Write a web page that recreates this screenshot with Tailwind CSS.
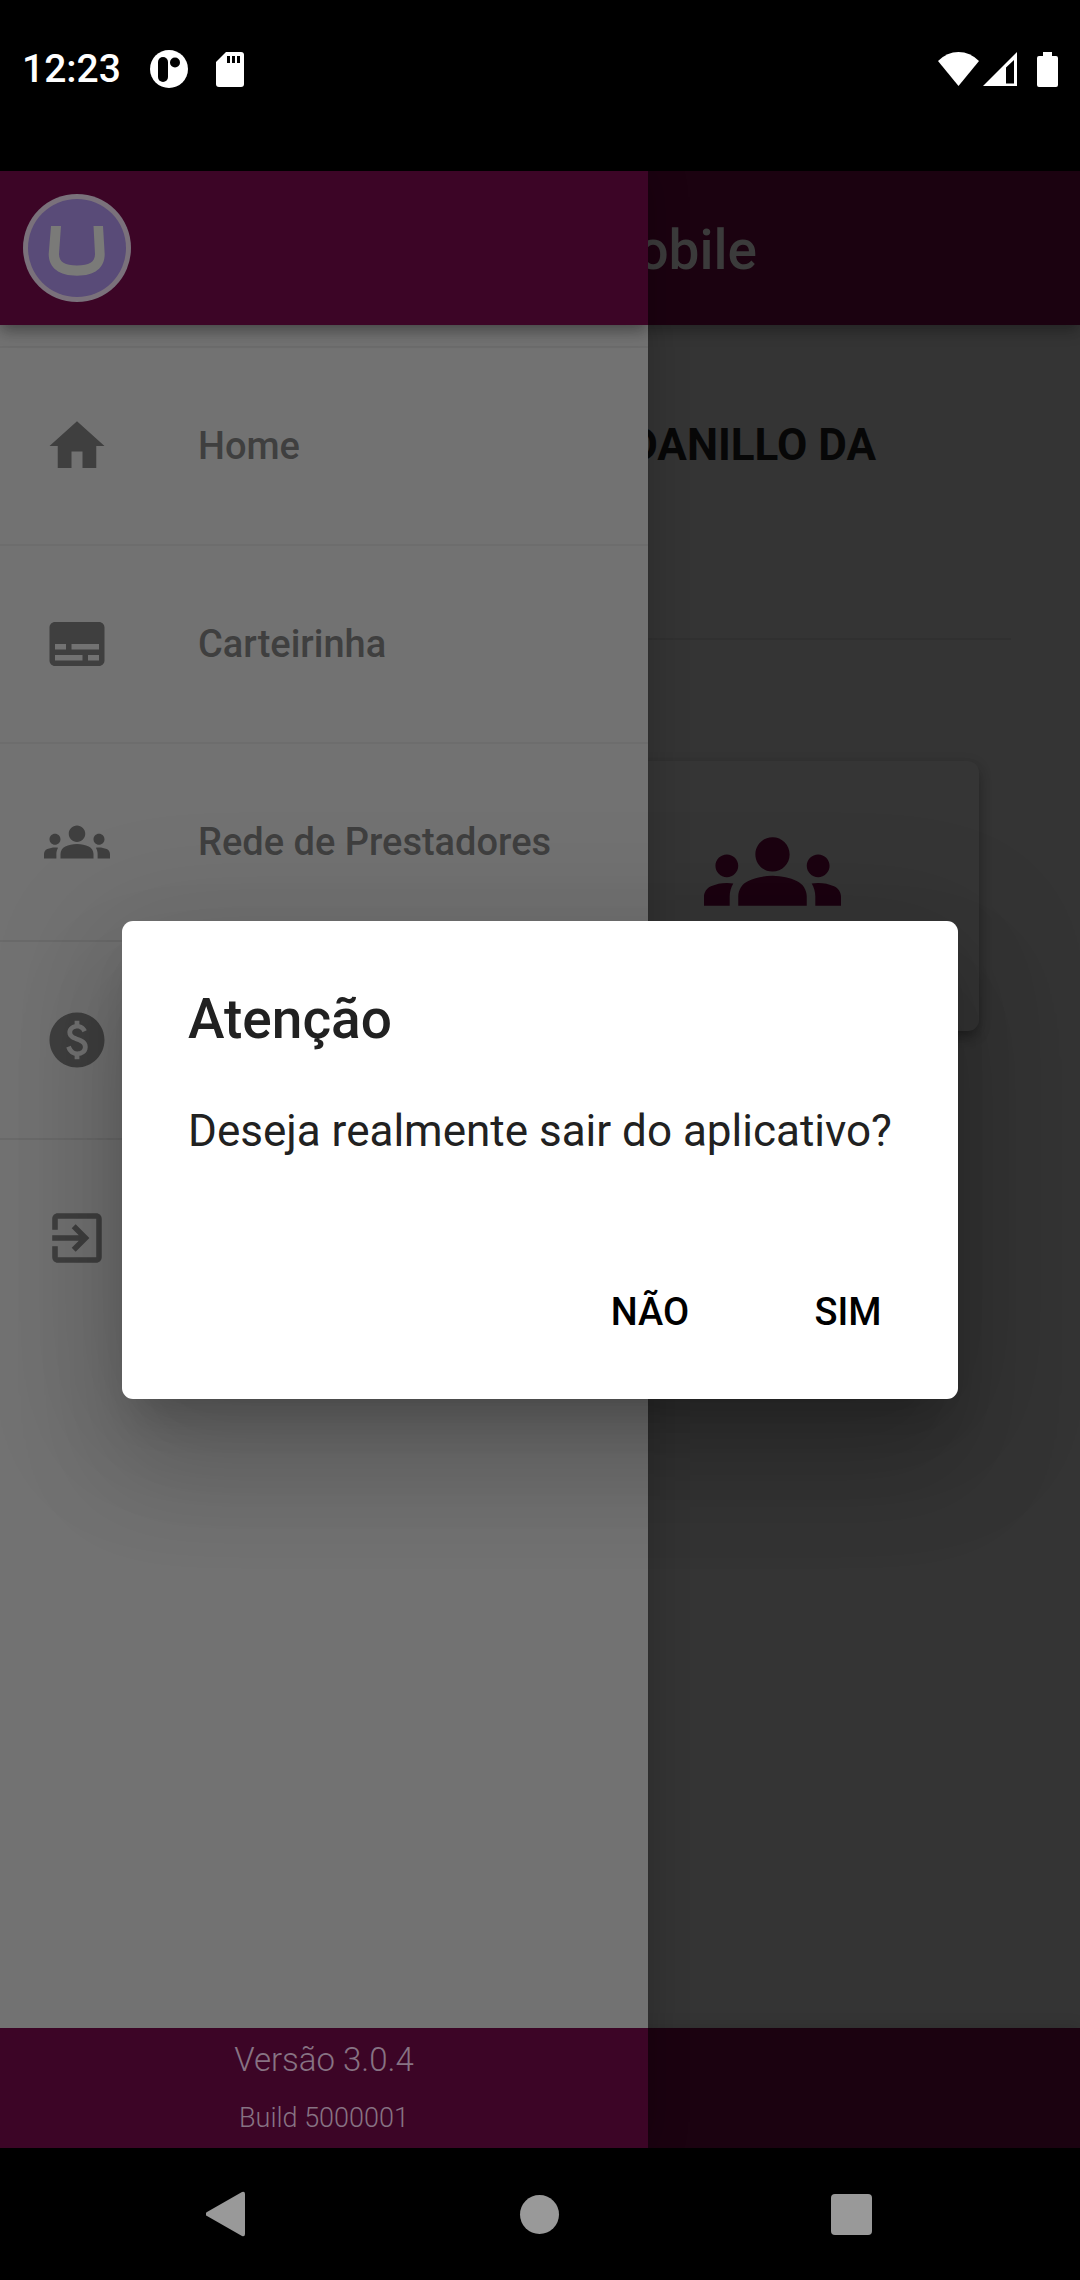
<!DOCTYPE html>
<html lang="pt-BR">
<head>
<meta charset="utf-8">
<meta name="viewport" content="width=device-width, initial-scale=1">
<title>Mobile</title>
<script src="https://cdn.jsdelivr.net/npm/@tailwindcss/browser@4"></script>
</head>
<body class="min-h-screen flex flex-col bg-black font-['Roboto',sans-serif]">

<!-- System status bar -->
<div class="h-[171px] shrink-0 text-white">
  <div class="h-[138px] px-[22px] flex items-center">
    <span class="text-[39px] font-medium leading-none">12:23</span>
    <svg class="ml-[29px] size-[38px]" viewBox="0 0 38 38" fill="currentColor"><circle cx="19" cy="19" r="19"/><rect x="8" y="7" width="10" height="25" rx="5" fill="#000"/><circle cx="25" cy="12.500" r="5" fill="#000"/></svg>
    <svg class="ml-[28px] w-[28px] h-[35px]" viewBox="0 0 28 35"><path fill="currentColor" d="M10 0H25Q28 0 28 3V32Q28 35 25 35H3Q0 35 0 32V10Z"/><path d="M11 4h3v7h-3zM16 4h3v7h-3zM21 4h3v7h-3z"/></svg>
    <span class="grow"></span>
    <svg class="w-[41px] h-[34px]" viewBox="0 0 41 34" fill="currentColor"><path d="M20.500 34L0 9Q9 0 20.500 0T41 9Z"/></svg>
    <svg class="ml-[4px] w-[34px] h-[34px]" viewBox="0 0 34 34" fill="currentColor"><path fill-rule="evenodd" d="M34 0V34H0ZM31 8L23 15.500V31.500H31Z"/></svg>
    <svg class="ml-[20px] w-[21px] h-[35px]" viewBox="0 0 21 35" fill="currentColor"><path d="M6 0h9v4h4q2 0 2 2v27q0 2-2 2H2q-2 0-2-2V6q0-2 2-2h4z"/></svg>
  </div>
</div>

<!-- App -->
<div class="relative grow flex flex-col bg-[#343434] overflow-hidden">

  <!-- Home page, dimmed behind the drawer -->
  <header class="relative z-10 h-[154px] shrink-0 flex items-center justify-end pt-1 pr-[323px] bg-[#1b0210] shadow-[0_6px_11px_-3px_rgba(0,0,0,0.2),0_8px_14px_0_rgba(0,0,0,0.14)]">
    <h1 class="text-[55px] leading-[64px] font-medium text-[#3b3b3b]">Mobile</h1>
  </header>
  <main class="grow flex flex-col">
    <p class="mt-[94px] pr-[204px] text-right text-[44px] leading-[52px] font-bold text-[#070707]">DANILLO DA</p>
    <hr class="mt-[167px] mx-[69px] border-t-2 border-[#303030]">
    <div class="mt-[121px] pr-[101px] flex justify-end">
      <button type="button" aria-label="Rede de Prestadores" class="w-[414px] h-[270px] pt-[42px] flex justify-center items-start rounded-[11px] bg-[#353535] shadow-[0_8px_14px_-3px_rgba(0,0,0,0.3),0_4px_14px_0_rgba(0,0,0,0.16)]">
        <svg class="size-[137px] text-[#1b0210]" viewBox="0 0 24 24" fill="currentColor"><path d="M12 12.750c1.630 0 3.070.39 4.240.9 1.080.48 1.760 1.560 1.760 2.730V18H6v-1.610c0-1.180.68-2.260 1.760-2.730 1.170-.52 2.610-.91 4.240-.91zM4 13c1.100 0 2-.9 2-2s-.9-2-2-2-2 .9-2 2 .9 2 2 2zm1.130 1.100c-.37-.06-.74-.1-1.130-.1-.99 0-1.930.21-2.780.58C.48 14.900 0 15.620 0 16.430V18h4.500v-1.610c0-.83.23-1.610.63-2.290zM20 13c1.100 0 2-.9 2-2s-.9-2-2-2-2 .9-2 2 .9 2 2 2zm4 3.430c0-.81-.48-1.530-1.220-1.850-.85-.37-1.790-.58-2.780-.58-.39 0-.76.04-1.130.1.4.68.63 1.460.63 2.290V18H24v-1.570zM12 6c1.660 0 3 1.340 3 3s-1.340 3-3 3-3-1.340-3-3 1.340-3 3-3z"/></svg>
      </button>
    </div>
  </main>
  <footer class="h-[120px] shrink-0 bg-[#1b0210] shadow-[0_-2px_14px_rgba(0,0,0,0.1)]"></footer>

  <!-- Navigation drawer -->
  <div class="absolute z-20 inset-y-0 left-0 w-3/5 shadow-[0_0_40px_rgba(0,0,0,0.2)]">
  <aside class="h-full flex flex-col bg-[#727272] overflow-hidden">
    <div class="relative h-[154px] shrink-0 flex items-center pl-[23px] bg-[#3c0526] shadow-[0_6px_11px_-3px_rgba(0,0,0,0.2),0_8px_14px_0_rgba(0,0,0,0.14),0_3px_22px_0_rgba(0,0,0,0.12)]">
      <svg class="size-[108px]" viewBox="0 0 108 108"><circle cx="54" cy="54" r="54" fill="#7a717b"/><circle cx="54" cy="54" r="49" fill="#594b78"/><path fill="#7a7a78" d="M28 32h10L36 60c0 8 6 11.500 18 11.500s18-3.500 18-11.500L70.500 32H80l1.700 28c0 14-10 21.700-27.700 21.700S25.700 74 25.700 60z"/></svg>
    </div>
    <nav class="mt-[21px] flex flex-col text-[#3f3f3f] text-[38px] font-medium">
      <a href="#" class="h-[198px] pl-[44px] flex items-center gap-[88px] border-t-2 border-[#6c6c6c]">
        <svg class="size-[66px] shrink-0" viewBox="0 0 24 24" fill="currentColor"><path d="M10 20v-6h4v6h5v-8h3L12 3 2 12h3v8z"/></svg>Home</a>
      <a href="#" class="h-[198px] pl-[44px] flex items-center gap-[88px] border-t-2 border-[#6d6d6d]">
        <svg class="size-[66px] shrink-0" viewBox="0 0 24 24" fill="currentColor"><path d="M20 4H4c-1.100 0-2 .9-2 2v12c0 1.100.9 2 2 2h16c1.100 0 2-.9 2-2V6c0-1.100-.9-2-2-2zM4 12h4v2H4v-2zm10 6H4v-2h10v2zm6 0h-4v-2h4v2zm0-4H10v-2h10v2z"/></svg>Carteirinha</a>
      <a href="#" class="h-[198px] pl-[44px] flex items-center gap-[88px] border-t-2 border-[#6d6d6d]">
        <svg class="size-[66px] shrink-0" viewBox="0 0 24 24" fill="currentColor"><path d="M12 12.750c1.630 0 3.070.39 4.240.9 1.080.48 1.760 1.560 1.760 2.730V18H6v-1.610c0-1.180.68-2.260 1.760-2.730 1.170-.52 2.610-.91 4.240-.91zM4 13c1.100 0 2-.9 2-2s-.9-2-2-2-2 .9-2 2 .9 2 2 2zm1.130 1.100c-.37-.06-.74-.1-1.130-.1-.99 0-1.930.21-2.780.58C.48 14.900 0 15.620 0 16.430V18h4.500v-1.610c0-.83.23-1.610.63-2.290zM20 13c1.100 0 2-.9 2-2s-.9-2-2-2-2 .9-2 2 .9 2 2 2zm4 3.430c0-.81-.48-1.530-1.220-1.850-.85-.37-1.790-.58-2.780-.58-.39 0-.76.04-1.130.1.4.68.63 1.460.63 2.290V18H24v-1.570zM12 6c1.660 0 3 1.340 3 3s-1.340 3-3 3-3-1.340-3-3 1.340-3 3-3z"/></svg>Rede de Prestadores</a>
      <a href="#" aria-label="Financeiro" class="h-[198px] pl-[44px] flex items-center border-t-2 border-[#6a6a6a]">
        <svg class="size-[66px] shrink-0" viewBox="0 0 24 24" fill="currentColor"><path d="M12 2C6.480 2 2 6.480 2 12s4.480 10 10 10 10-4.480 10-10S17.520 2 12 2zm.88 15.760V19h-1.750v-1.290c-.74-.18-2.390-.77-3.020-2.960l1.650-.67c.06.22.58 2.090 2.400 2.090.93 0 1.980-.48 1.980-1.610 0-.96-.7-1.460-2.280-2.030-1.100-.39-3.350-1.030-3.350-3.310 0-.1.010-2.400 2.620-2.960V5h1.750v1.240c1.840.32 2.510 1.790 2.660 2.230l-1.580.67c-.11-.35-.59-1.340-1.900-1.340-.7 0-1.810.37-1.810 1.390 0 .95.86 1.310 2.640 1.900 2.400.83 3.010 2.050 3.010 3.450 0 2.630-2.500 3.130-3.020 3.220z"/></svg></a>
      <a href="#" aria-label="Sair" class="h-[198px] pl-[44px] flex items-center border-t-2 border-[#6a6a6a]">
        <svg class="size-[66px] shrink-0" viewBox="0 0 24 24" fill="currentColor"><path d="M10.090 15.590L11.500 17l5-5-5-5-1.410 1.410L12.670 11H3v2h9.670l-2.580 2.590zM19 3H5c-1.110 0-2 .9-2 2v4h2V5h14v14H5v-4H3v4c0 1.100.89 2 2 2h14c1.100 0 2-.9 2-2V5c0-1.100-.9-2-2-2z"/></svg></a>
    </nav>
    <div class="mt-auto h-[120px] shrink-0 pt-[2px] bg-[#3c0526] text-[#877383] text-center font-light">
      <p class="text-[33px] leading-[59px]">Versão 3.0.4</p>
      <p class="text-[27px] leading-[59px]">Build 5000001</p>
    </div>
  </aside>
  </div>

  <!-- Exit confirmation -->
  <div class="absolute z-30 inset-0 px-[122px] flex items-center">
    <div role="alertdialog" aria-labelledby="dlg-title" aria-describedby="dlg-text" class="w-full pt-[66px] pb-[36px] rounded-[11px] bg-white shadow-[0_30px_41px_-19px_rgba(0,0,0,0.2),0_66px_105px_8px_rgba(0,0,0,0.14),0_25px_127px_22px_rgba(0,0,0,0.12)]">
      <h2 id="dlg-title" class="px-[66px] text-[55px] leading-[64px] font-medium text-[#212121]">Atenção</h2>
      <p id="dlg-text" class="mt-[54px] px-[66px] text-[44px] leading-[52px] text-[#212121]">Deseja realmente sair do aplicativo?</p>
      <div class="mt-[106px] pr-[22px] flex justify-end gap-[22px] text-[38px] font-medium text-black">
        <button type="button" class="w-[176px] h-[100px]">NÃO</button>
        <button type="button" class="w-[176px] h-[100px]">SIM</button>
      </div>
    </div>
  </div>
</div>

<!-- System navigation bar -->
<div class="h-[132px] shrink-0 px-[73px] grid grid-cols-3 text-[#999]">
  <button type="button" aria-label="Voltar" class="flex items-center justify-center"><svg class="size-[46px]" viewBox="3 0 46 46" fill="currentColor"><path d="M39 1Q42 0 42 3V43Q42 46 39 45L4 25Q1 23 4 21Z"/></svg></button>
  <button type="button" aria-label="Início" class="flex items-center justify-center"><span class="size-[39px] rounded-full bg-current"></span></button>
  <button type="button" aria-label="Recentes" class="flex items-center justify-center"><span class="size-[41px] rounded-[4px] bg-current"></span></button>
</div>
</body>
</html>
